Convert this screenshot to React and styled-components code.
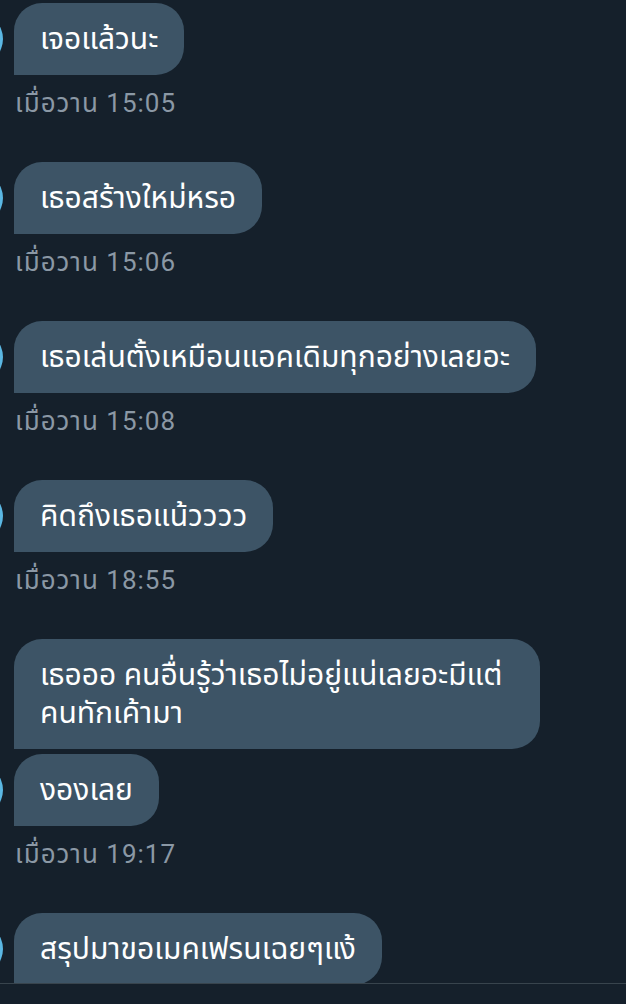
import React from "react";
import styled, { createGlobalStyle } from "styled-components";

const GlobalStyle = createGlobalStyle`
  html, body {
    margin: 0;
    padding: 0;
    background: #15202b;
  }
  * {
    box-sizing: border-box;
  }
`;

const Screen = styled.div`
  width: 626px;
  height: 1004px;
  display: flex;
  flex-direction: column;
  background: #15202b;
  overflow: hidden;
  font-family: Roboto, "Noto Sans Thai", "Noto Sans", sans-serif;
`;

const Thread = styled.div`
  flex: 1;
  min-height: 0;
  overflow: hidden;
  padding-top: 3px;
  display: flex;
  flex-direction: column;
  gap: 43px;
`;

const Group = styled.div`
  display: flex;
  flex-direction: column;
  gap: 5px;
`;

const Row = styled.div`
  display: flex;
  align-items: center;
  gap: 11px;
  margin-left: -49px;
`;

const Avatar = styled.div`
  flex: none;
  width: 52px;
  height: 52px;
  border-radius: 50%;
  background: ${(p) => (p.$visible ? "#5bb8e4" : "transparent")};
`;

const Bubble = styled.div`
  max-width: 526px;
  padding: 17px 26px;
  background: #3d5466;
  color: #ffffff;
  font-size: 30px;
  line-height: 38px;
  border-radius: 28px 28px 28px 0;
`;

const Stamp = styled.div`
  margin-top: 7px;
  padding-left: 15px;
  color: #8b98a5;
  font-size: 26px;
  letter-spacing: 1px;
  line-height: 32px;
`;

const Composer = styled.div`
  flex: none;
  height: 21px;
  border-top: 1px solid #38444d;
  background: #15202b;
`;

const groups = [
  { messages: ["เจอแล้วนะ"], time: "เมื่อวาน 15:05" },
  { messages: ["เธอสร้างใหม่หรอ"], time: "เมื่อวาน 15:06" },
  { messages: ["เธอเล่นตั้งเหมือนแอคเดิมทุกอย่างเลยอะ"], time: "เมื่อวาน 15:08" },
  { messages: ["คิดถึงเธอแน้วววว"], time: "เมื่อวาน 18:55" },
  {
    messages: ["เธอออ คนอื่นรู้ว่าเธอไม่อยู่แน่เลยอะมีแต่คนทักเค้ามา", "งองเลย"],
    time: "เมื่อวาน 19:17",
  },
  { messages: ["สรุปมาขอเมคเฟรนเฉยๆแง้"] },
];

const App = () => {
  return (
    <Screen>
      <GlobalStyle />
      <Thread>
        {groups.map((g, gi) => (
          <Group key={gi}>
            {g.messages.map((m, mi) => (
              <Row key={mi}>
                <Avatar $visible={mi === g.messages.length - 1} />
                <Bubble>{m}</Bubble>
              </Row>
            ))}
            {g.time && <Stamp>{g.time}</Stamp>}
          </Group>
        ))}
      </Thread>
      <Composer />
    </Screen>
  );
};

export default App;
